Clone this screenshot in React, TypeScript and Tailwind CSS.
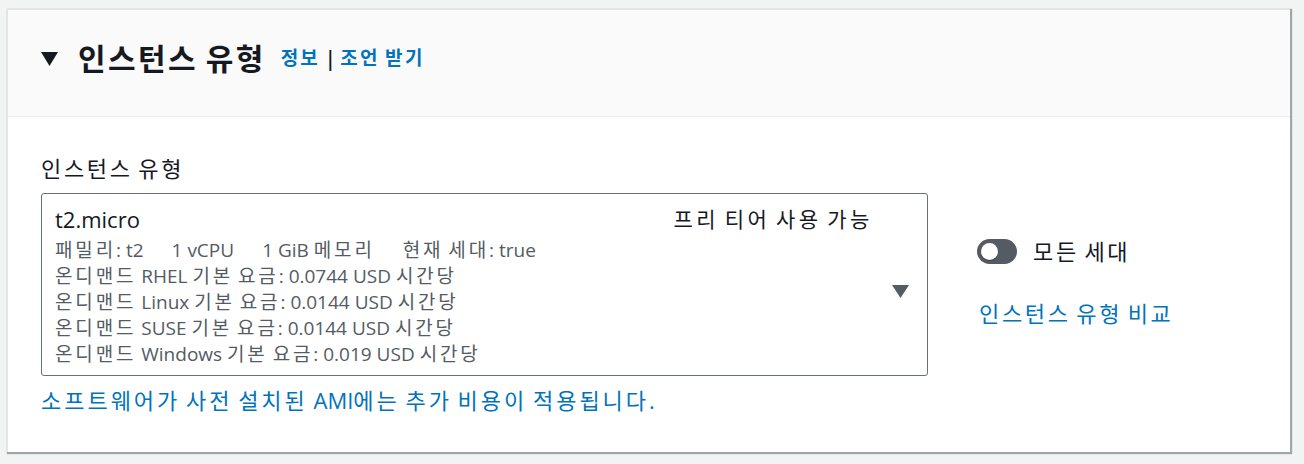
import React from "react";

const font = { fontFamily: '"Open Sans", "Noto Sans CJK KR", sans-serif' };

function K({ t, c }: { t: string; c: string }) {
  const parts = t.split(/([\uAC00-\uD7A3]+)/);
  return (
    <>
      {parts.map((p, i) =>
        /[\uAC00-\uD7A3]/.test(p) ? (
          <span key={i} className={c}>
            {p}
          </span>
        ) : (
          <React.Fragment key={i}>{p}</React.Fragment>
        )
      )}
    </>
  );
}

const T = "tracking-[0.12em]";
const D = "tracking-[0.15em]";

export default function App() {
  return (
    <div className="w-[1304px] h-[464px] bg-[#f2f3f3] pl-[7px] pt-[9px] pr-[14px]" style={font}>
      <div className="h-[443px] bg-white border-l border-t border-[#e3e5e5] shadow-[1px_1px_1px_1px_rgba(0,28,36,0.35)] flex flex-col">
        <div className="h-[107px] bg-[#fafafa] border-b border-[#eaeded] flex items-center pl-[33px] pb-[9px]">
          <svg width="17" height="14" viewBox="0 0 17 14" className="mr-[20px]">
            <polygon points="0,0 17,0 8.5,14" fill="#16191f" />
          </svg>
          <span className="text-[30px] font-bold text-[#16191f] leading-none">
            <K t="인스턴스 유형" c="tracking-[0.08em]" />
          </span>
          <span className="ml-[15px] text-[19px] font-bold text-[#0073bb] leading-none">
            <K t="정보" c="tracking-[0.1em]" />
          </span>
          <span className="ml-[5px] mr-[4px] text-[21px] font-semibold text-[#16191f] leading-none">|</span>
          <span className="text-[19px] font-bold text-[#0073bb] leading-none">
            <K t="조언 받기" c="tracking-[0.13em]" />
          </span>
        </div>
        <div className="flex-1 pl-[33px] pt-[36px] flex">
          <div className="flex flex-col">
            <div className="text-[22px] text-[#16191f] leading-[30px] h-[40px]">
              <K t="인스턴스 유형" c={T} />
            </div>
            <div className="w-[887px] h-[183px] border border-[#687078] rounded-[3px] pl-[13px] pr-[18px] pt-[10px] flex">
              <div className="flex-1 flex flex-col">
                <div className="flex justify-between pr-[19px]">
                  <span className="text-[22px] text-[#16191f] leading-[30px]">t2.micro</span>
                  <span className="text-[21px] text-[#16191f] leading-[30px]">
                    <K t="프리 티어 사용 가능" c="tracking-[0.17em]" />
                  </span>
                </div>
                <div className="mt-[3px] text-[19px] text-[#545b64] leading-[26px] flex flex-col">
                  <div className="flex gap-[28px]">
                    <span>
                      <K t="패밀리: t2" c={D} />
                    </span>
                    <span>1 vCPU</span>
                    <span>
                      <K t="1 GiB 메모리" c={D} />
                    </span>
                    <span>
                      <K t="현재 세대: true" c={D} />
                    </span>
                  </div>
                  <div>
                    <K t="온디맨드 RHEL 기본 요금: 0.0744 USD 시간당" c={D} />
                  </div>
                  <div>
                    <K t="온디맨드 Linux 기본 요금: 0.0144 USD 시간당" c={D} />
                  </div>
                  <div>
                    <K t="온디맨드 SUSE 기본 요금: 0.0144 USD 시간당" c={D} />
                  </div>
                  <div>
                    <K t="온디맨드 Windows 기본 요금: 0.019 USD 시간당" c={D} />
                  </div>
                </div>
              </div>
              <div className="flex items-center pt-[4px]">
                <svg width="17" height="13" viewBox="0 0 17 13">
                  <polygon points="0,0 17,0 8.5,13" fill="#545b64" />
                </svg>
              </div>
            </div>
            <div className="mt-[9px] text-[22px] text-[#0073bb] leading-[30px]">
              <K t="소프트웨어가 사전 설치된 AMI에는 추가 비용이 적용됩니다." c="tracking-[0.135em]" />
            </div>
          </div>
          <div className="ml-[49px] pt-[83px] flex flex-col">
            <div className="flex items-center">
              <div className="w-[40px] h-[25px] rounded-full bg-[#545b64] flex items-center pl-[4px]">
                <div className="w-[17px] h-[17px] rounded-full bg-white shadow-[0_1px_1px_rgba(0,0,0,0.3)]" />
              </div>
              <span className="ml-[16px] text-[22px] text-[#16191f] leading-[30px]">
                <K t="모든 세대" c={T} />
              </span>
            </div>
            <div className="mt-[32px] ml-[2px] text-[22px] text-[#0073bb] leading-[30px]">
              <K t="인스턴스 유형 비교" c={T} />
            </div>
          </div>
        </div>
      </div>
    </div>
  );
}
